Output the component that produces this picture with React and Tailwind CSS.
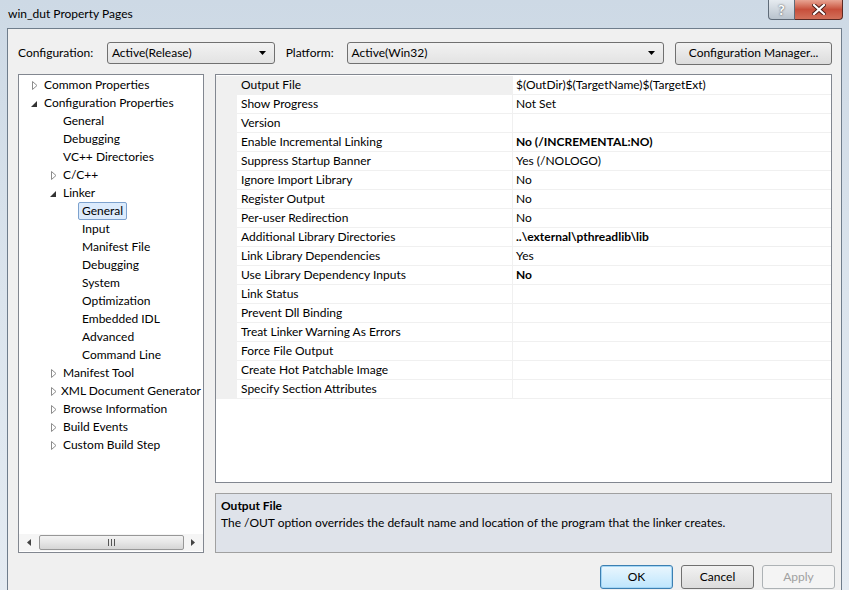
import React from 'react';

const font = "font-['Lato','Liberation_Sans',sans-serif]";

const tree = [
  { t: 'Common Properties', lvl: 0, arrow: 'closed' },
  { t: 'Configuration Properties', lvl: 0, arrow: 'open' },
  { t: 'General', lvl: 1 },
  { t: 'Debugging', lvl: 1 },
  { t: 'VC++ Directories', lvl: 1 },
  { t: 'C/C++', lvl: 1, arrow: 'closed' },
  { t: 'Linker', lvl: 1, arrow: 'open' },
  { t: 'General', lvl: 2, sel: true },
  { t: 'Input', lvl: 2 },
  { t: 'Manifest File', lvl: 2 },
  { t: 'Debugging', lvl: 2 },
  { t: 'System', lvl: 2 },
  { t: 'Optimization', lvl: 2 },
  { t: 'Embedded IDL', lvl: 2 },
  { t: 'Advanced', lvl: 2 },
  { t: 'Command Line', lvl: 2 },
  { t: 'Manifest Tool', lvl: 1, arrow: 'closed' },
  { t: 'XML Document Generator', lvl: 1, arrow: 'closed' },
  { t: 'Browse Information', lvl: 1, arrow: 'closed' },
  { t: 'Build Events', lvl: 1, arrow: 'closed' },
  { t: 'Custom Build Step', lvl: 1, arrow: 'closed' },
];

const props = [
  ['Output File', '$(OutDir)$(TargetName)$(TargetExt)'],
  ['Show Progress', 'Not Set'],
  ['Version', ''],
  ['Enable Incremental Linking', 'No (/INCREMENTAL:NO)', true],
  ['Suppress Startup Banner', 'Yes (/NOLOGO)'],
  ['Ignore Import Library', 'No'],
  ['Register Output', 'No'],
  ['Per-user Redirection', 'No'],
  ['Additional Library Directories', '..\\external\\pthreadlib\\lib', true],
  ['Link Library Dependencies', 'Yes'],
  ['Use Library Dependency Inputs', 'No', true],
  ['Link Status', ''],
  ['Prevent Dll Binding', ''],
  ['Treat Linker Warning As Errors', ''],
  ['Force File Output', ''],
  ['Create Hot Patchable Image', ''],
  ['Specify Section Attributes', ''],
];

const indent = ['pl-[11px]', 'pl-[30px]', 'pl-[49px]'];

function Arrow({ kind }) {
  if (kind === 'closed')
    return (
      <svg width="6" height="9" viewBox="0 0 6 9" className="ml-[2px]">
        <path d="M0.5 0.5 L5 4.5 L0.5 8.5 Z" fill="white" stroke="#8c8c8c" strokeWidth="1" />
      </svg>
    );
  if (kind === 'open')
    return (
      <svg width="6" height="6" viewBox="0 0 6 6" className="ml-[1px] mt-[2px]">
        <path d="M6 0 L6 6 L0 6 Z" fill="#333" />
      </svg>
    );
  return null;
}

function Combo({ value, w }) {
  return (
    <div className={`${w} h-[22px] flex items-center justify-between pl-[4px] pr-[8px] border border-[#707070] rounded-[3px] bg-gradient-to-b from-[#f2f2f2] to-[#e3e3e3]`}>
      <span>{value}</span>
      <svg width="7" height="4" viewBox="0 0 7 4"><path d="M0 0 L7 0 L3.5 4 Z" fill="#000" /></svg>
    </div>
  );
}

function Btn({ children, kind }) {
  const style =
    kind === 'default'
      ? 'border-[#3c7fb1] shadow-[inset_0_0_0_1px_#a4d6f5] bg-gradient-to-b from-[#eaf6fd] to-[#bee6fd] text-black'
      : kind === 'disabled'
      ? 'border-[#adb2b5] bg-[#f4f4f4] text-[#a0a0a0]'
      : 'border-[#707070] bg-gradient-to-b from-[#f2f2f2] to-[#dcdcdc] text-black';
  return (
    <div className={`w-[73px] h-[24px] flex items-center justify-center border rounded-[3px] ${style}`}>{children}</div>
  );
}

export default function App() {
  return (
    <div className={`${font} text-[12px] text-black w-[849px] h-[590px] flex flex-col bg-gradient-to-b from-[#cdd9e5] via-[#dbe4ed] to-[#e4ebf2] overflow-hidden`}>
      {/* title bar */}
      <div className="h-[28px] flex items-start justify-between pl-[8px] pr-[6px]">
        <div className="mt-[5px]">win_dut Property Pages</div>
        <div className="flex">
          <div className="w-[27px] h-[20px] flex items-center justify-center border border-[#5f6b78] border-t-0 rounded-bl-[4px] bg-gradient-to-b from-[#e6ebf0] to-[#b9c3cd] text-white text-[14px] font-bold [text-shadow:0_0_2px_#333]">?</div>
          <div className="w-[48px] h-[20px] flex items-center justify-center border border-[#5a2a24] border-t-0 border-l-0 rounded-br-[4px] bg-gradient-to-b from-[#e8a493] via-[#c74f3b] to-[#d2705a]">
            <svg width="14" height="11" viewBox="0 0 14 11">
              <path d="M2 1 L12 10 M12 1 L2 10" stroke="#4a1a14" strokeWidth="4" strokeLinecap="square" />
              <path d="M2 1 L12 10 M12 1 L2 10" stroke="#fff" strokeWidth="2.2" strokeLinecap="square" />
            </svg>
          </div>
        </div>
      </div>

      {/* client area */}
      <div className="flex-1 mx-[7px] border-l border-t border-r border-[#6f7d8c] bg-[#f0f0f0] flex flex-col pl-[10px] pr-[9px] pt-[13px]">
        <div className="flex items-center h-[22px]">
          <span className="w-[89px]">Configuration:</span>
          <Combo value="Active(Release)" w="w-[168px]" />
          <span className="ml-[11px] w-[61px]">Platform:</span>
          <Combo value="Active(Win32)" w="w-[318px]" />
          <div className="ml-[11px] w-[157px] h-[23px] flex items-center justify-center border border-[#707070] rounded-[3px] bg-gradient-to-b from-[#f2f2f2] to-[#dcdcdc]">
            Configuration Manager...
          </div>
        </div>

        <div className="mt-[10px] h-[479px] flex">
          {/* tree */}
          <div className="w-[186px] border border-[#828790] bg-white flex flex-col">
            <div className="flex-1 pt-[1px] overflow-hidden">
              {tree.map((n, i) => (
                <div key={i} className={`h-[18px] flex items-center ${indent[n.lvl]}`}>
                  <div className="w-[10px] flex items-center">{n.arrow && <Arrow kind={n.arrow} />}</div>
                  <div className={`h-[18px] px-[3px] flex items-center rounded-[2px] border whitespace-nowrap ${n.sel ? 'border-[#7da2ce] bg-[#dcebfc]' : 'border-transparent'}`}>{n.t}</div>
                </div>
              ))}
            </div>
            <div className="h-[17px] flex items-center bg-[#f5f5f5] px-[2px] mb-[1px]">
              <div className="w-[16px] flex justify-center">
                <svg width="4" height="7" viewBox="0 0 4 7"><path d="M4 0 L4 7 L0 3.5 Z" fill="#444" /></svg>
              </div>
              <div className="ml-[2px] w-[145px] h-[15px] rounded-[2px] border border-[#979797] bg-gradient-to-b from-[#f3f3f3] via-[#e6e6e6] to-[#d5d5d5] flex items-center justify-center">
                <div className="flex gap-[2px]">
                  <div className="w-[1px] h-[7px] bg-[#555]" />
                  <div className="w-[1px] h-[7px] bg-[#555]" />
                  <div className="w-[1px] h-[7px] bg-[#555]" />
                </div>
              </div>
              <div className="flex-1 flex justify-center">
                <svg width="4" height="7" viewBox="0 0 4 7"><path d="M0 0 L0 7 L4 3.5 Z" fill="#444" /></svg>
              </div>
            </div>
          </div>

          {/* right side */}
          <div className="ml-[11px] flex-1 flex flex-col">
            <div className="h-[409px] border border-[#828790] bg-white pt-[1px]">
              {props.map(([name, value, bold], i) => (
                <div key={i} className="h-[19px] flex border-b border-[#f0f0f0]">
                  <div className="w-[21px] bg-[#f0f0f0]" />
                  <div className={`w-[276px] pl-[4px] flex items-center border-r border-[#f0f0f0] whitespace-nowrap ${i === 0 ? 'bg-[#f0f0f0]' : ''}`}>{name}</div>
                  <div className={`flex-1 pl-[3px] flex items-center whitespace-nowrap ${bold ? 'font-bold' : ''}`}>{value}</div>
                </div>
              ))}
            </div>
            <div className="mt-[10px] flex-1 border border-[#a0a0a0] bg-[#dfe3ea] pl-[5px] pt-[3px] leading-[17px]">
              <div className="font-bold">Output File</div>
              <div>The /OUT option overrides the default name and location of the program that the linker creates.</div>
            </div>
          </div>
        </div>

        <div className="mt-[12px] flex justify-end gap-[8px] mr-[-3px]">
          <Btn kind="default">OK</Btn>
          <Btn>Cancel</Btn>
          <Btn kind="disabled">Apply</Btn>
        </div>
      </div>
    </div>
  );
}
